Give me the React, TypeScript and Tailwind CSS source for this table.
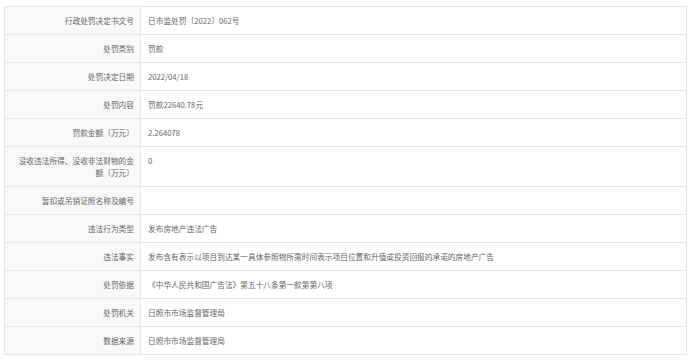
const rows: { label: string; value: string; tall?: boolean }[] = [
  { label: "行政处罚决定书文号", value: "日市监处罚〔2022〕062号" },
  { label: "处罚类别", value: "罚款" },
  { label: "处罚决定日期", value: "2022/04/18" },
  { label: "处罚内容", value: "罚款22640.78元" },
  { label: "罚款金额（万元）", value: "2.264078" },
  { label: "没收违法所得、没收非法财物的金额（万元）", value: "0", tall: true },
  { label: "暂扣或吊销证照名称及编号", value: "" },
  { label: "违法行为类型", value: "发布房地产违法广告" },
  {
    label: "违法事实",
    value: "发布含有表示以项目到达某一具体参照物所需时间表示项目位置和升值或投资回报的承诺的房地产广告",
  },
  { label: "处罚依据", value: "《中华人民共和国广告法》第五十八条第一款第第八项" },
  { label: "处罚机关", value: "日照市市场监督管理局" },
  { label: "数据来源", value: "日照市市场监督管理局" },
]

export default function App() {
  return (
    <div className="w-[692px] h-[361px] bg-white pt-[6px] pl-[4px] font-['Noto_Sans_CJK_SC','Noto_Sans',sans-serif] text-[7.7px] text-[#666]">
      <div className="w-[683px] border-t border-l border-r border-[#e6e6e6]">
        {rows.map((r) => (
          <div
            key={r.label}
            className={`flex border-b border-[#e6e6e6] ${r.tall ? "h-[40px]" : "h-[28px]"}`}
          >
            <div
              className={`w-[136px] shrink-0 bg-[#f8f8f8] border-r border-[#e6e6e6] pl-[10px] pr-[6px] flex justify-end text-right leading-[12px] ${
                r.tall ? "items-start pt-[8px]" : "items-center"
              }`}
            >
              {r.label}
            </div>
            <div
              className={`flex-1 pl-[7px] flex leading-[12px] ${
                r.tall ? "items-start pt-[8px]" : "items-center"
              }`}
            >
              {r.value}
            </div>
          </div>
        ))}
      </div>
    </div>
  )
}
